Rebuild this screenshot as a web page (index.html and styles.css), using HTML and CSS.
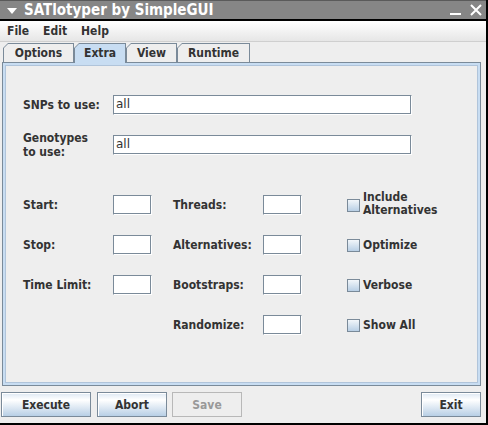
FILE: index.html
```html
<!DOCTYPE html>
<html>
<head>
<meta charset="utf-8">
<link rel="stylesheet" href="styles.css">
</head>
<body>
<div class="window">
  <div class="titlebar">
    <svg class="menu-arrow" width="10" height="6" viewBox="0 0 10 6"><polygon points="0,0 10,0 5,6" fill="#fff"/></svg>
    <span class="title">SATlotyper by SimpleGUI</span>
    <span class="spacer"></span>
    <svg class="tb-icon" width="12" height="12" viewBox="0 0 12 12"><rect x="0" y="9" width="11" height="2" fill="#fff"/></svg>
    <svg class="tb-icon close" width="12" height="12" viewBox="0 0 12 12"><path d="M1 1 L11 11 M11 1 L1 11" stroke="#fff" stroke-width="2"/></svg>
  </div>
  <div class="menubar">
    <span class="menu">File</span>
    <span class="menu">Edit</span>
    <span class="menu">Help</span>
  </div>
  <div class="tabbar">
    <div class="tab tab-options"><span class="tab-in">Options</span></div>
    <div class="tab tab-extra selected"><span class="tab-in">Extra</span></div>
    <div class="tab tab-view"><span class="tab-in">View</span></div>
    <div class="tab tab-runtime"><span class="tab-in">Runtime</span></div>
  </div>
  <div class="panel">
    <div class="panel-in">
      <div class="top-grid">
        <label class="lbl">SNPs to use:</label>
        <div class="field wide">all</div>
        <label class="lbl two">Genotypes<br>to use:</label>
        <div class="field wide">all</div>
      </div>
      <div class="opt-grid">
        <label class="lbl">Start:</label>
        <div class="field small"></div>
        <label class="lbl">Threads:</label>
        <div class="field small"></div>
        <div class="check"><span class="box"></span><span class="lbl two">Include<br>Alternatives</span></div>

        <label class="lbl">Stop:</label>
        <div class="field small"></div>
        <label class="lbl">Alternatives:</label>
        <div class="field small"></div>
        <div class="check"><span class="box"></span><span class="lbl">Optimize</span></div>

        <label class="lbl">Time Limit:</label>
        <div class="field small"></div>
        <label class="lbl">Bootstraps:</label>
        <div class="field small"></div>
        <div class="check"><span class="box"></span><span class="lbl">Verbose</span></div>

        <span></span>
        <span></span>
        <label class="lbl">Randomize:</label>
        <div class="field small"></div>
        <div class="check"><span class="box"></span><span class="lbl">Show All</span></div>
      </div>
    </div>
  </div>
  <div class="buttons">
    <div class="btn-group">
      <button class="btn btn-wide">Execute</button>
      <button class="btn">Abort</button>
      <button class="btn" disabled>Save</button>
    </div>
    <button class="btn btn-exit">Exit</button>
  </div>
</div>
</body>
</html>
```
FILE: styles.css
```css
html, body {
  margin: 0;
  padding: 0;
  background: #eeeeee;
}
.window {
  width: 488px;
  height: 425px;
  box-sizing: border-box;
  border-right: 2px solid #000;
  border-bottom: 2px solid #000;
  background: #eeeeee;
  font-family: "DejaVu Sans Condensed", "DejaVu Sans", sans-serif;
  font-size: 12px;
  color: #333333;
  display: flex;
  flex-direction: column;
}
.titlebar {
  height: 18px;
  border-top: 1px solid #5a5a5a;
  border-bottom: 2px solid #000;
  background: #868686;
  display: flex;
  align-items: center;
  padding-left: 7px;
  padding-right: 4px;
}
.menu-arrow { margin-right: 7px; margin-top: 1px; }
.title {
  color: #fff;
  font-weight: bold;
  font-size: 15px;
  line-height: 18px;
}
.spacer { flex: 1; }
.tb-icon { margin-left: 9px; }
.tb-icon.close { margin-left: 8px; }
.menubar {
  height: 20px;
  border-bottom: 1px solid #cfcfcf;
  background: linear-gradient(#ffffff, #e6e6e6);
  display: flex;
  align-items: center;
  padding-left: 7px;
}
.menu {
  font-weight: bold;
  margin-right: 14px;
}
.tabbar {
  display: flex;
  padding-left: 3px;
  margin-top: 1px;
  height: 19px;
  align-items: flex-end;
}
.tab {
  height: 19px;
  background: #7a8a99;
  clip-path: polygon(5px 0, 100% 0, 100% 100%, 0 100%, 0 5px);
  padding: 1px 1px 0 1px;
  box-sizing: border-box;
  display: flex;
}
.tab-in {
  flex: 1;
  background: #eeeeee;
  clip-path: polygon(4px 0, 100% 0, 100% 100%, 0 100%, 0 4px);
  font-weight: bold;
  text-align: center;
  line-height: 18px;
  padding: 0 9px;
}
.tab.selected .tab-in { background: #c8ddf2; }
.tab.selected { margin-bottom: -1px; height: 20px; padding-bottom: 1px; }
.tab.selected .tab-in { margin-bottom: -1px; }
.tab-options { width: 71px; }
.tab-extra { width: 52px; }
.tab-view { width: 51px; }
.tab-runtime { width: 73px; }
.panel {
  margin-left: 2px;
  width: 479px;
  height: 324px;
  box-sizing: border-box;
  border: 1px solid #7a8a99;
  background: #c8ddf2;
  padding: 2px;
}
.panel-in {
  height: 100%;
  box-sizing: border-box;
  background: #eeeeee;
  border: 1px solid #b0c4da;
  padding: 29px 0 0 17px;
}
.top-grid {
  display: grid;
  grid-template-columns: 90px 299px;
  grid-auto-rows: 20px;
  row-gap: 20px;
  align-items: center;
}
.opt-grid {
  margin-top: 40px;
  display: grid;
  grid-template-columns: 90px 60px 90px 84px auto;
  grid-auto-rows: 20px;
  row-gap: 20px;
  align-items: center;
}
.lbl {
  font-weight: bold;
  line-height: 14px;
  white-space: nowrap;
}
.field {
  height: 20px;
  box-sizing: border-box;
  background: #fff;
  border: 1px solid;
  border-color: #7a8a99 #ffffff #ffffff #7a8a99;
  box-shadow: inset -1px -1px 0 #7a8a99;
  font-family: "DejaVu Sans", sans-serif;
  font-size: 12px;
  line-height: 17px;
  padding-left: 2px;
  color: #333;
}
.field.small { width: 39px; }
.check {
  display: flex;
  align-items: center;
  gap: 3px;
}
.box {
  width: 13px;
  height: 13px;
  box-sizing: border-box;
  border: 1px solid #7a8a99;
  background: linear-gradient(#f2f6fa, #b8cfe5);
}
.check .lbl.two { line-height: 13px; margin-top: -2px; }
.buttons {
  display: flex;
  justify-content: space-between;
  margin-top: 6px;
  padding: 0 5px 0 1px;
}
.btn-group { display: flex; gap: 5px; }
.btn {
  width: 70px;
  height: 25px;
  box-sizing: border-box;
  border: 1px solid #7a8a99;
  background: linear-gradient(#dde8f3 0%, #ffffff 30%, #b8cfe5 100%);
  box-shadow: inset 1px 1px 0 #fff;
  font-family: "DejaVu Sans Condensed", "DejaVu Sans", sans-serif;
  font-weight: bold;
  font-size: 12px;
  color: #333;
  padding: 0;
}
.btn-wide { width: 90px; margin-right: 1px; }
.btn-exit { width: 60px; }
.btn:disabled {
  background: #eeeeee;
  border-color: #b8b8b8;
  box-shadow: none;
  color: #999;
}
```
